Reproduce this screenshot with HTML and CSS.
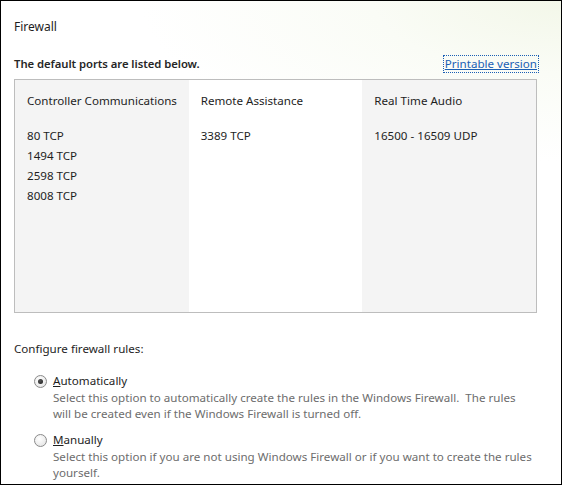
FILE: index.html
```html
<!DOCTYPE html>
<html>
<head>
<meta charset="utf-8">
<link rel="stylesheet" href="styles.css">
</head>
<body>
<div class="frame">
  <div class="title">Firewall</div>
  <div class="ports-head">
    <span class="intro">The default ports are listed below.</span>
    <a class="link" href="#">Printable version</a>
  </div>
  <div class="ports">
    <div class="col shaded">
      <div class="col-title">Controller Communications</div>
      <div class="vals"><div>80 TCP</div><div>1494 TCP</div><div>2598 TCP</div><div>8008 TCP</div></div>
    </div>
    <div class="col">
      <div class="col-title">Remote Assistance</div>
      <div class="vals"><div>3389 TCP</div></div>
    </div>
    <div class="col shaded">
      <div class="col-title">Real Time Audio</div>
      <div class="vals"><div>16500 - 16509 UDP</div></div>
    </div>
  </div>
  <div class="config">Configure firewall rules:</div>
  <div class="options">
    <div class="option">
      <span class="radio checked"></span>
      <div class="opt-body">
        <div class="opt-label"><u>A</u>utomatically</div>
        <div class="opt-desc">Select this option to automatically create the rules in the Windows Firewall.&nbsp; The rules will be created even if the Windows Firewall is turned off.</div>
      </div>
    </div>
    <div class="option">
      <span class="radio"></span>
      <div class="opt-body">
        <div class="opt-label"><u>M</u>anually</div>
        <div class="opt-desc">Select this option if you are not using Windows Firewall or if you want to create the rules yourself.</div>
      </div>
    </div>
  </div>
</div>
</body>
</html>
```
FILE: styles.css
```css
html, body { margin: 0; padding: 0; }
body { font-family: "Noto Sans", "Open Sans", sans-serif; font-size: 11.6px; color: #1e1e1e; }
.frame {
  width: 562px; height: 485px; box-sizing: border-box;
  border: 1px solid #000;
  background: radial-gradient(ellipse 420px 160px at 100% 0%, #f3f7e9 0%, #fafcf6 45%, #ffffff 100%);
  padding: 0 24px 0 13px;
  overflow: hidden;
}
.title { font-size: 12px; line-height: 16px; margin-top: 18px; }
.ports-head { display: flex; justify-content: space-between; align-items: flex-end; margin-top: 21px; line-height: 16px; }
.intro { font-weight: 600; font-size: 11.3px; letter-spacing: -0.05px; color: #262626; }
.link { color: #1a5fb4; text-decoration: underline; outline: 1px dotted #1a5fb4; outline-offset: 0; padding: 0 1px; margin-right: -1px; }
.ports { display: flex; border: 1px solid #bdbdbd; height: 234px; box-sizing: border-box; margin-top: 7px; }
.col { flex: 1; padding: 13px 8px 0 12px; background: #fff; white-space: nowrap; }
.col.shaded { background: #f4f4f4; }
.col-title { line-height: 16px; }
.vals { margin-top: 17px; line-height: 20px; font-weight: 400; }
.config { margin-top: 28px; line-height: 16px; }
.options { margin-top: 16px; padding-left: 20px; display: flex; flex-direction: column; gap: 10px; }
.option { display: flex; gap: 6px; }
.radio {
  width: 11px; height: 11px; border-radius: 50%; flex: none; margin-top: 2px;
  border: 1px solid #8a8a8a;
  background: radial-gradient(circle at 40% 35%, #ffffff 0%, #e6e6e6 80%);
  position: relative;
}
.radio.checked::after {
  content: ""; position: absolute; left: 3px; top: 3px; width: 5px; height: 5px; border-radius: 50%;
  background: radial-gradient(circle at 40% 35%, #555 0%, #1a1a1a 100%);
}
.opt-label { line-height: 16px; }
.opt-desc { color: #6d6d6d; line-height: 16px; margin-top: 1px; max-width: 481px; }
```
